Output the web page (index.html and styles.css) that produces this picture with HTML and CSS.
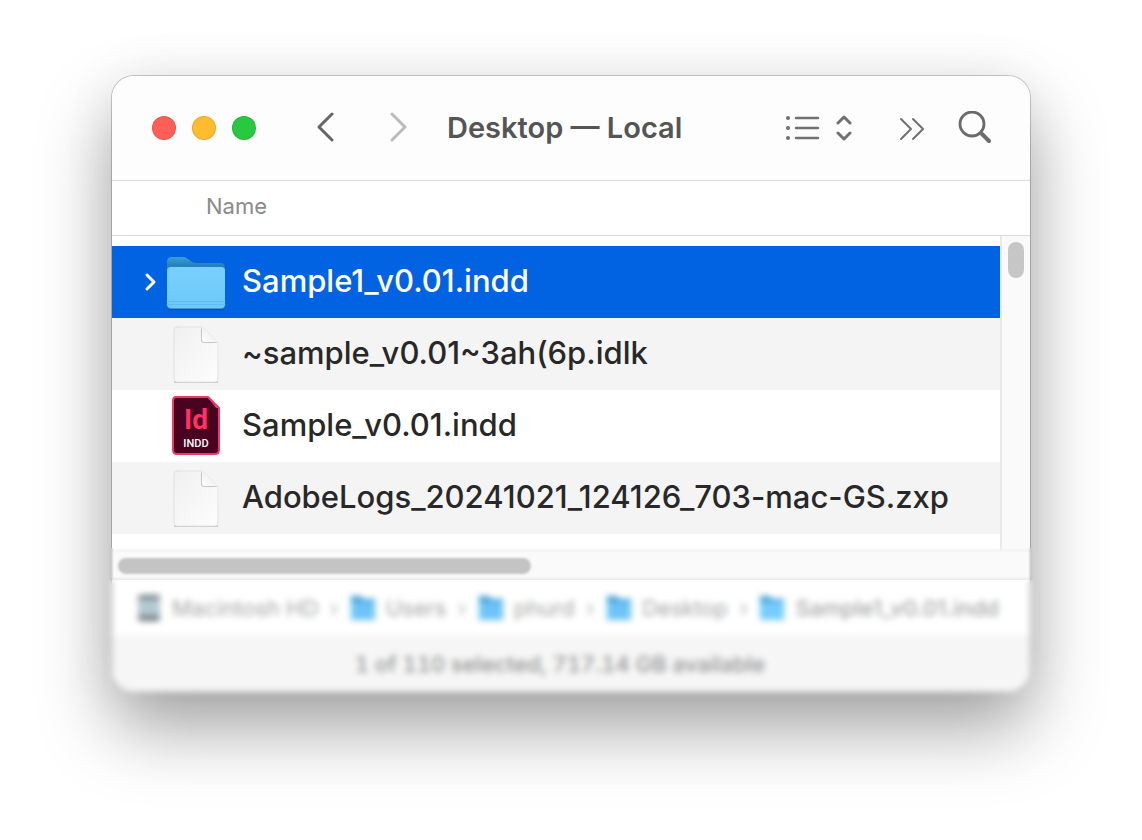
FILE: index.html
```html
<!DOCTYPE html>
<html lang="en">
<head>
<meta charset="utf-8">
<meta name="viewport" content="width=device-width, initial-scale=1">
<title>Desktop — Local</title>
<link rel="stylesheet" href="styles.css">
</head>
<body>
	<!-- shared shapes -->
	<svg class="defs" aria-hidden="true">
		<defs>
			<linearGradient id="folderBack" x1="0" y1="0" x2="0" y2="1">
				<stop offset="0" stop-color="#3a9fd8"/>
				<stop offset="0.3" stop-color="#2583bd"/>
			</linearGradient>
			<linearGradient id="folderFront" x1="0" y1="0" x2="0" y2="1">
				<stop offset="0" stop-color="#79d0fd"/>
				<stop offset="1" stop-color="#6cc9f9"/>
			</linearGradient>
			<linearGradient id="paper" x1="0" y1="0" x2="1" y2="1">
				<stop offset="0" stop-color="#f0f0f0"/>
				<stop offset="1" stop-color="#fdfdfd"/>
			</linearGradient>
			<linearGradient id="fold" x1="0" y1="1" x2="1" y2="0">
				<stop offset="0" stop-color="#ffffff"/>
				<stop offset="0.5" stop-color="#f2f2f2"/>
			</linearGradient>
		</defs>
		<symbol id="folder" viewBox="0 -1 60 60">
			<path d="M1 9 Q1 4 6 4 H17 Q20 4 22 6 L26 9 Q28 10 30 10 H54 Q59 10 59 15 V30 H1 Z" fill="url(#folderBack)"/>
			<rect x="1" y="16" width="58" height="41" rx="4" fill="#0650b4"/>
			<rect x="1" y="14" width="58" height="42" rx="4" fill="#3b9bd0"/>
			<rect x="1" y="14" width="58" height="41" rx="4" fill="url(#folderFront)"/>
			<path d="M1 48.5 H59 M1 51.5 H59" stroke="#5fbbec" stroke-width="1"/>
		</symbol>
		<symbol id="document" viewBox="0 -1 60 60">
			<path d="M9 57 H51" stroke="#c4c4c4" stroke-width="2"/>
			<path d="M11 2 H37 L52 17 V54 Q52 57 49 57 H11 Q8 57 8 54 V5 Q8 2 11 2 Z" fill="url(#paper)" stroke="#e2e2e2" stroke-width="1"/>
			<path d="M36 4 V15 Q36 17 38 17 H50" fill="none" stroke="#c6c6c6" stroke-width="2"/>
			<path d="M36 1 L52 17 H38 Q36 17 36 15 Z" fill="url(#fold)"/>
		</symbol>
	</svg>

	<main id="desktop">
		<section id="window">
			<header id="toolbar">
				<div id="lights">
					<button class="light close" aria-label="Close"></button>
					<button class="light minimize" aria-label="Minimize"></button>
					<button class="light zoom" aria-label="Zoom"></button>
				</div>
				<div id="history">
					<button aria-label="Back">
						<svg width="20" height="32" viewBox="0 0 20 32"><path d="M17 2 L4 15 L17 28" stroke="#666" stroke-width="3"/></svg>
					</button>
					<button aria-label="Forward" disabled>
						<svg width="20" height="32" viewBox="0 0 20 32"><path d="M3 2 L16 15 L3 28" stroke="#bbb" stroke-width="3"/></svg>
					</button>
				</div>
				<h1>Desktop — Local</h1>
				<div id="tools">
					<button id="view" aria-label="View as list">
						<svg width="34" height="28" viewBox="0 0 34 28">
							<path d="M10 4 H32 M10 14 H32 M10 24 H32" stroke="#707070" stroke-width="2.5"/>
							<g fill="#707070"><circle cx="2" cy="4" r="2"/><circle cx="2" cy="14" r="2"/><circle cx="2" cy="24" r="2"/></g>
						</svg>
						<svg width="16" height="28" viewBox="0 0 16 28"><path d="M2 9 L8 3 L14 9 M2 19 L8 25 L14 19" stroke="#707070" stroke-width="3"/></svg>
					</button>
					<button aria-label="More">
						<svg width="26" height="26" viewBox="0 0 26 26"><path d="M2 4 L12 14 L2 24 M14 4 L24 14 L14 24" stroke="#707070" stroke-width="2"/></svg>
					</button>
					<button aria-label="Search">
						<svg width="34" height="34" viewBox="0 0 34 34">
							<circle cx="14" cy="13" r="12" fill="none" stroke="#6b6b6b" stroke-width="2.8"/>
							<path d="M24 23 L31 30" stroke="#6b6b6b" stroke-width="4"/>
						</svg>
					</button>
				</div>
			</header>

			<div id="list">
				<table>
					<thead>
						<tr><th scope="col">Name</th></tr>
					</thead>
					<tbody>
						<tr class="selected">
							<td><div class="file">
								<svg class="disclosure" width="14" height="20" viewBox="0 0 14 20"><path d="M4 3 L11 10 L4 17" stroke="#fff" stroke-width="3"/></svg>
								<svg class="icon"><use href="#folder"/></svg>
								<span>Sample1_v0.01.indd</span>
							</div></td>
						</tr>
						<tr>
							<td><div class="file">
								<svg class="icon"><use href="#document"/></svg>
								<span>~sample_v0.01~3ah(6p.idlk</span>
							</div></td>
						</tr>
						<tr>
							<td><div class="file">
								<svg class="icon" viewBox="0 0 60 60">
									<path d="M10 1 H42 L53 12 V54 Q53 58 49 58 H11 Q7 58 7 54 V5 Q7 1 10 1 Z" fill="#49021f" stroke="#ee3a69" stroke-width="2"/>
									<path d="M42 1 L53 12 H50 Z" fill="#ee3a69"/>
									<text x="30" y="33" class="indd-mark">Id</text>
									<text x="30" y="51" class="indd-type">INDD</text>
								</svg>
								<span>Sample_v0.01.indd</span>
							</div></td>
						</tr>
						<tr>
							<td><div class="file">
								<svg class="icon"><use href="#document"/></svg>
								<span>AdobeLogs_20241021_124126_703-mac-GS.zxp</span>
							</div></td>
						</tr>
					</tbody>
				</table>
				<div id="trackY"><div></div></div>
			</div>
			<div id="trackX"><div></div></div>

			<nav id="path">
				<a href="#">
					<svg width="26" height="28" viewBox="0 0 26 28">
						<rect x="2" y="1" width="22" height="26" rx="3" fill="#6b757b"/>
						<rect x="2" y="5" width="22" height="17" fill="#b4c8d1"/>
					</svg>
					Macintosh HD
				</a>
				<span>›</span>
				<a href="#"><svg width="26" height="28" viewBox="0 0 26 28"><path d="M1 2 H10 L13 5 H25 V26 H1 Z" fill="#6cc4f6"/><path d="M1 2 H10 L13 5 H25 V8 H1 Z" fill="#459fd2"/></svg>Users</a>
				<span>›</span>
				<a href="#"><svg width="26" height="28" viewBox="0 0 26 28"><path d="M1 2 H10 L13 5 H25 V26 H1 Z" fill="#6cc4f6"/><path d="M1 2 H10 L13 5 H25 V8 H1 Z" fill="#459fd2"/></svg>phurd</a>
				<span>›</span>
				<a href="#"><svg width="26" height="28" viewBox="0 0 26 28"><path d="M1 2 H10 L13 5 H25 V26 H1 Z" fill="#6cc4f6"/><path d="M1 2 H10 L13 5 H25 V8 H1 Z" fill="#459fd2"/></svg>Desktop</a>
				<span>›</span>
				<a href="#"><svg width="26" height="28" viewBox="0 0 26 28"><path d="M1 2 H10 L13 5 H25 V26 H1 Z" fill="#73cdfd"/><path d="M1 2 H10 L13 5 H25 V8 H1 Z" fill="#459fd2"/></svg><span class="current">Sample1_v0.01.indd</span></a>
			</nav>
			<footer id="status">1 of 110 selected, 717.14 GB available</footer>
		</section>
		<div id="softBlur"></div>
		<div id="strongBlur"></div>
	</main>
</body>
</html>
```
FILE: styles.css
```css
:root {
	--selection:#0263e2;
	--stripe:#f4f4f4;
	--thumb:#c6c6c6;
	--line:#dcdcdc;
}

* {
	box-sizing:border-box;
	font-family:Inter, "Liberation Sans", sans-serif;
}

html, body {
	margin:0;
	min-height:100vh;
	background-color:#fff;
}

body {
	overflow:hidden;
}

.defs {
	position:absolute;
	width:0;
	height:0;
}

svg {
	flex:none;
	display:block;
}

svg path {
	stroke-linecap:round;
	stroke-linejoin:round;
}

svg path[stroke]:not([fill]) {
	fill:none;
}

button {
	display:flex;
	background:none;
	border:none;
	padding:0;
}

#desktop {
	position:relative;
	margin:76px 112px 0;
}

#window {
	border-radius:22px;
	overflow:hidden;
	background-color:#fff;
	box-shadow:0 0 0 1px rgba(0,0,0,0.2), 0 36px 72px rgba(0,0,0,0.36), 0 0 60px rgba(0,0,0,0.05);
}

/* toolbar */
#toolbar {
	display:flex;
	align-items:center;
	height:105px;
	padding:0 38px 0 40px;
	background-color:#fdfdfd;
	border-bottom:1px solid var(--line);
}

#lights {
	display:flex;
	gap:16px;
}

.light {
	width:24px;
	height:24px;
	border-radius:50%;
	border:1px solid rgba(0,0,0,0.1);
}

.close {
	background-color:#ff5f57;
}

.minimize {
	background-color:#febc2e;
}

.zoom {
	background-color:#28c840;
}

#history {
	display:flex;
	gap:54px;
	margin-left:59px;
}

h1 {
	margin:0 0 0 38px;
	font-size:29px;
	font-weight:600;
	line-height:36px;
	color:#555;
	white-space:nowrap;
}

#tools {
	display:flex;
	align-items:center;
	gap:33px;
	margin-left:auto;
}

#tools button:nth-child(2) {
	margin-left:14px;
}

#view {
	gap:16px;
}

/* file list */
#list {
	position:relative;
}

table {
	width:100%;
	border-spacing:0;
}

th {
	height:55px;
	padding:0 94px 5px;
	border-bottom:1px solid var(--line);
	text-align:left;
	font-size:22px;
	font-weight:400;
	color:#8a8a8a;
}

tbody::before, tbody::after {
	content:"";
	display:block;
	height:10px;
}

tbody::after {
	height:16px;
}

td {
	padding:0;
}

tbody tr:nth-child(even) {
	background-color:var(--stripe);
}

.file {
	position:relative;
	display:flex;
	align-items:center;
	gap:16px;
	height:72px;
	padding-left:54px;
	font-size:31px;
	font-weight:450;
	color:#282828;
	white-space:nowrap;
}

.file span {
	padding-bottom:4px;
}

tbody .selected {
	background-color:var(--selection);
}

.selected .file {
	font-weight:500;
	color:#fff;
}

.icon {
	width:60px;
	height:60px;
}

.disclosure {
	position:absolute;
	left:31px;
}

.indd-mark {
	font:700 28px Roboto, sans-serif;
	fill:#ff3366;
	text-anchor:middle;
}

.indd-type {
	font:500 11px Roboto, sans-serif;
	fill:#fff;
	text-anchor:middle;
}

/* scrollbars */
#trackY {
	position:absolute;
	top:55px;
	right:0;
	bottom:0;
	width:30px;
	padding:6px;
	background-color:#fafafa;
	border-left:2px solid #e9e9e9;
}

#trackY div {
	width:16px;
	height:36px;
	border-radius:8px;
	background-color:var(--thumb);
}

#trackX {
	height:30px;
	padding:7px 6px;
	background-color:#fafafa;
	border-top:1px solid #e9e9e9;
	border-bottom:2px solid #ebebeb;
}

#trackX div {
	width:calc(46% - 4px);
	height:16px;
	border-radius:8px;
	background-color:#c4c4c4;
}

/* path and status bars */
#path {
	display:flex;
	align-items:center;
	justify-content:space-between;
	height:56px;
	padding:0 31px 0 24px;
	font-size:22px;
	color:#b0b0b0;
}

#path a {
	display:flex;
	align-items:center;
	gap:10px;
	color:#a6a6a6;
	text-decoration:none;
	white-space:nowrap;
}

#path .current {
	font-weight:500;
}

#status {
	height:56px;
	padding-right:22px;
	background-color:#f6f6f6;
	border-top:1px solid #efefef;
	font-size:22px;
	font-weight:500;
	font-variant-numeric:tabular-nums;
	line-height:54px;
	text-align:center;
	color:#929292;
}

#softBlur, #strongBlur {
	position:absolute;
	left:-10px;
	right:-10px;
	pointer-events:none;
}

#softBlur {
	bottom:112px;
	height:32px;
	backdrop-filter:blur(1px);
}

#strongBlur {
	bottom:-10px;
	height:122px;
	backdrop-filter:blur(3px);
}
```
